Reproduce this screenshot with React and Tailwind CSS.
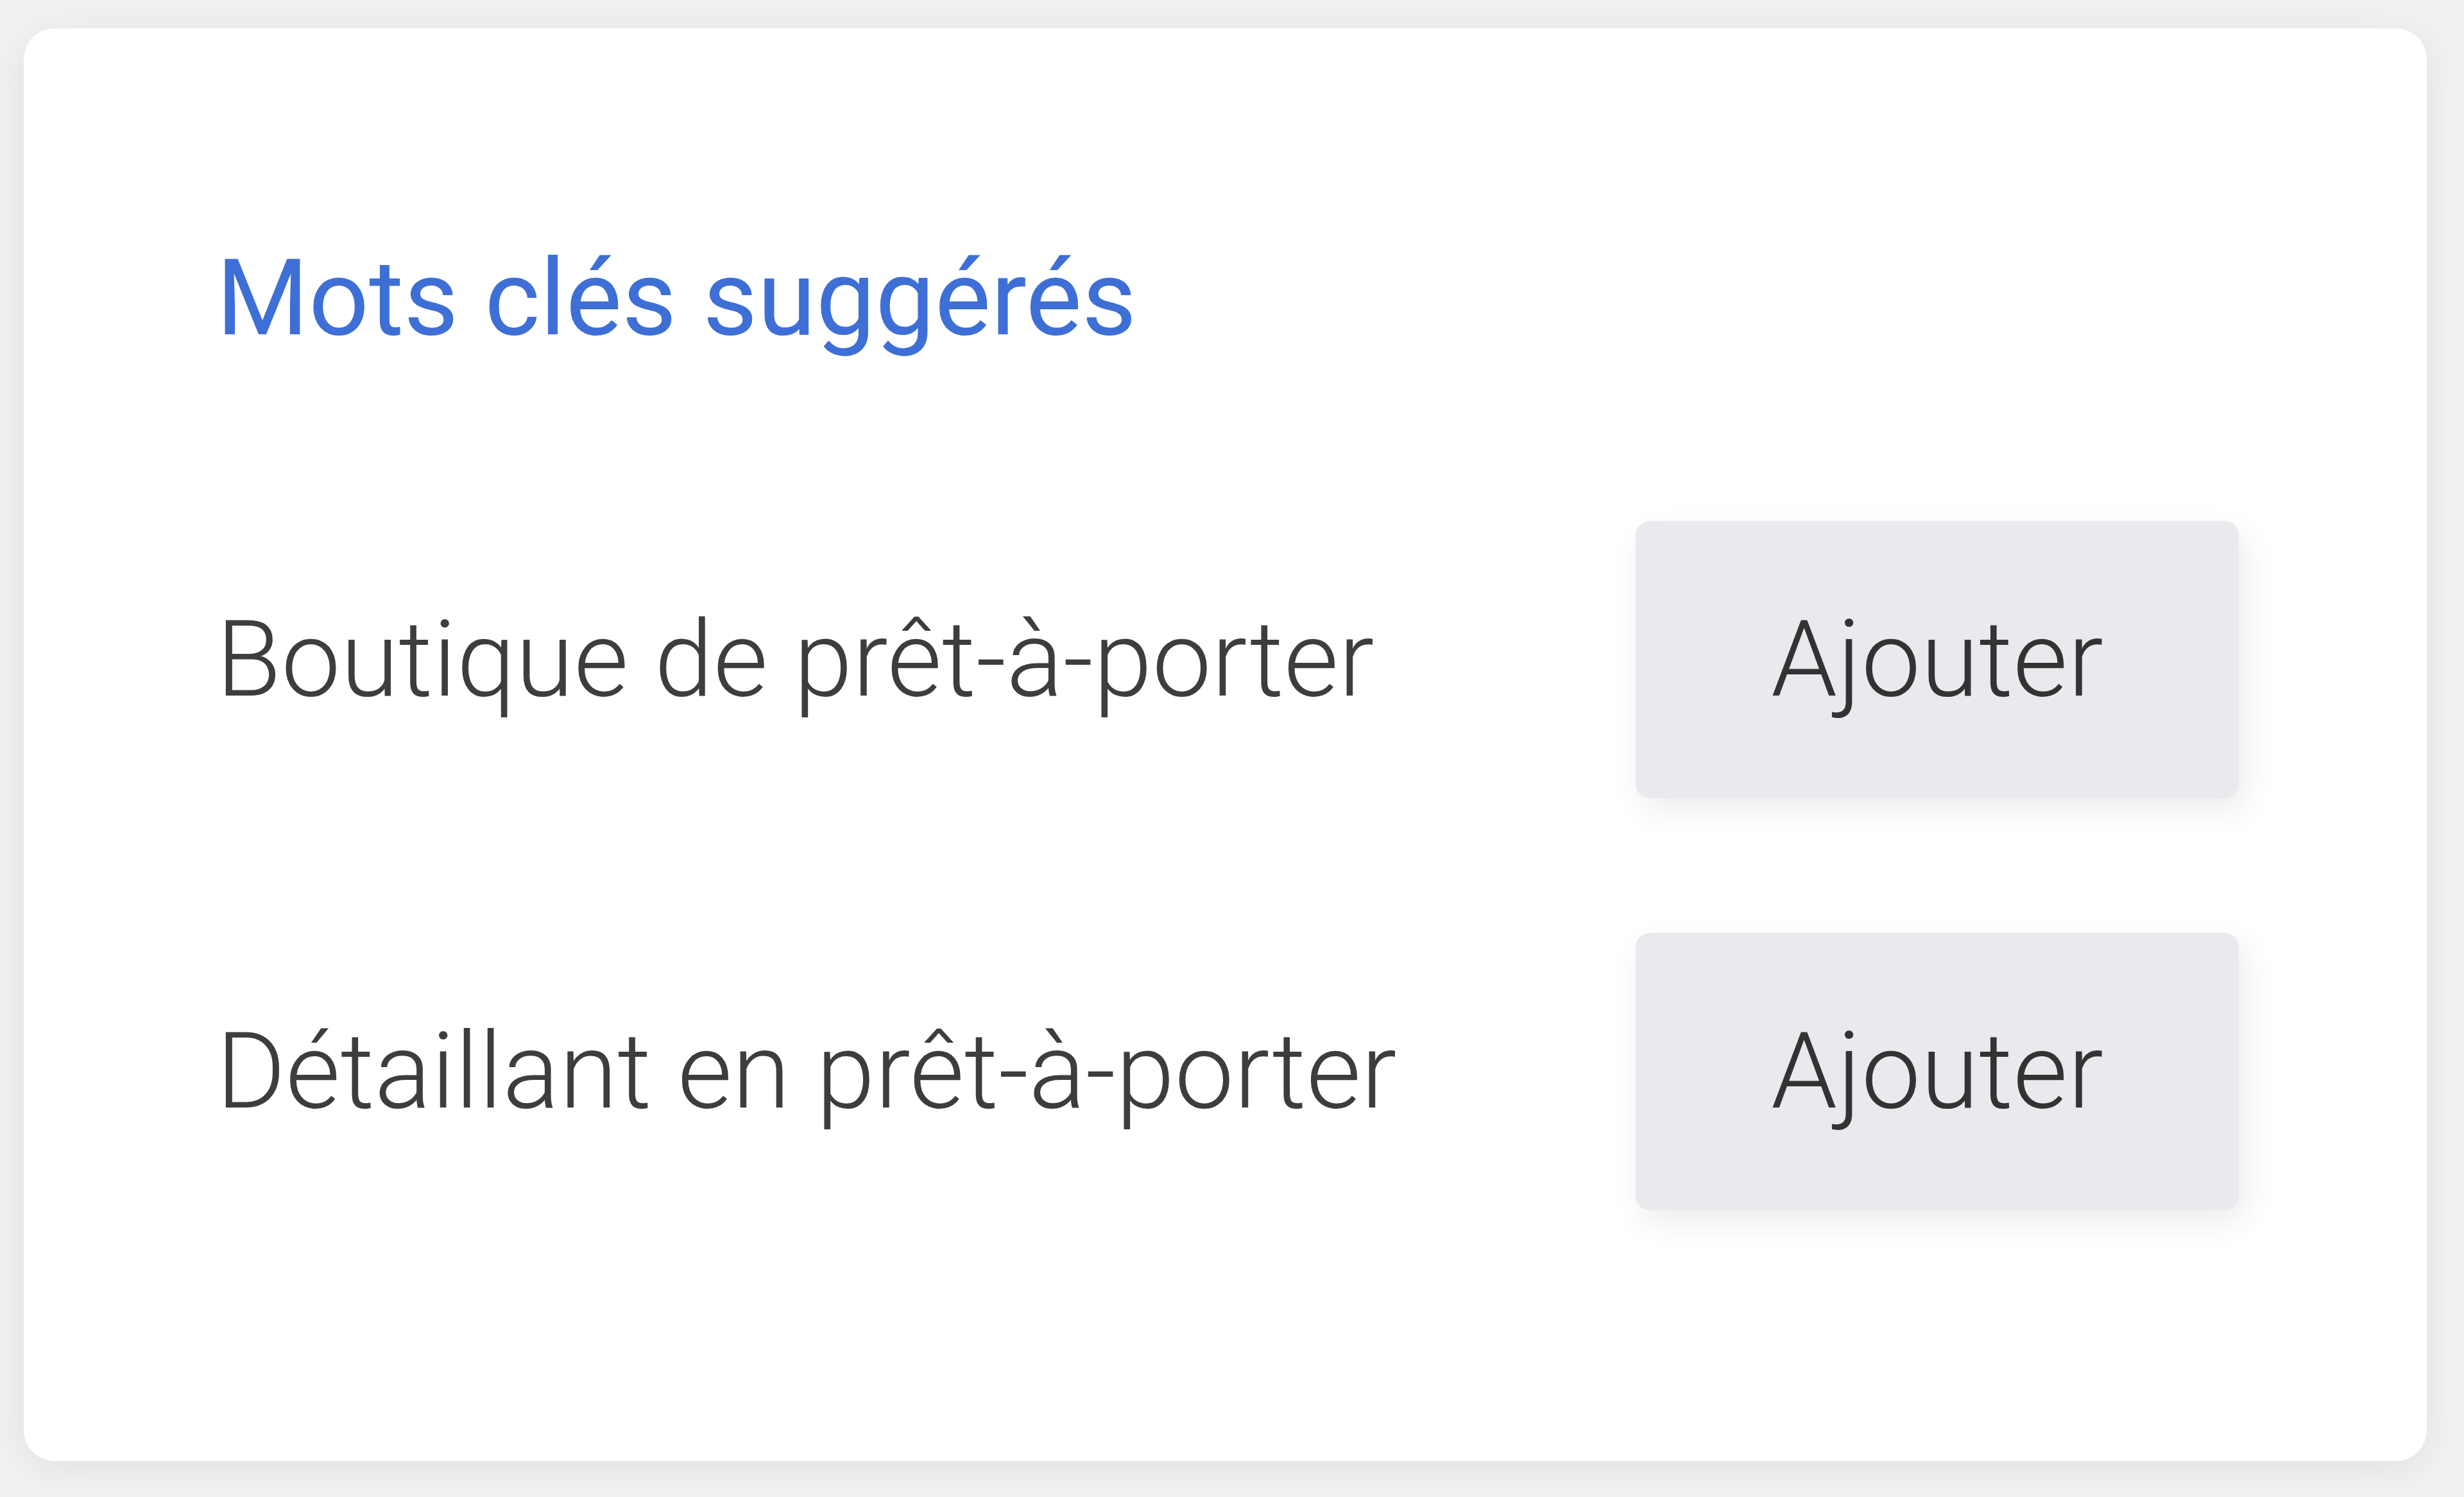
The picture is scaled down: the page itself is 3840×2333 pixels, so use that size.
// App.jsx
const rows = ["Boutique de prêt-à-porter", "Détaillant en prêt-à-porter"];

export default function App() {
  return (
    <div className="w-full h-[2333px] bg-[#f1f1f1] pt-[44px] pl-[37px] font-['Roboto',sans-serif]">
      <div className="w-[3745px] h-[2233px] bg-white rounded-[48px] shadow-[0_10px_60px_rgba(0,0,0,0.07)] pl-[300px] pr-[293px] pt-[322px] flex flex-col">
        <h2 className="text-[165px] leading-[1.2] font-normal text-[#3d6fd6]">
          Mots clés suggérés
        </h2>

        <div className="mt-[248px] flex flex-col gap-[210px]">
          {rows.map((label) => (
            <div key={label} className="h-[432px] flex items-center justify-between">
              <span className="text-[165px] leading-[1.2] font-light text-[#3d3d3d]">
                {label}
              </span>
              <button className="w-[940px] h-[432px] rounded-[22px] bg-[#e9eaed] shadow-[10px_18px_50px_rgba(0,0,0,0.08)] text-[165px] leading-[1.2] font-light text-[#333]">
                Ajouter
              </button>
            </div>
          ))}
        </div>
      </div>
    </div>
  );
}
